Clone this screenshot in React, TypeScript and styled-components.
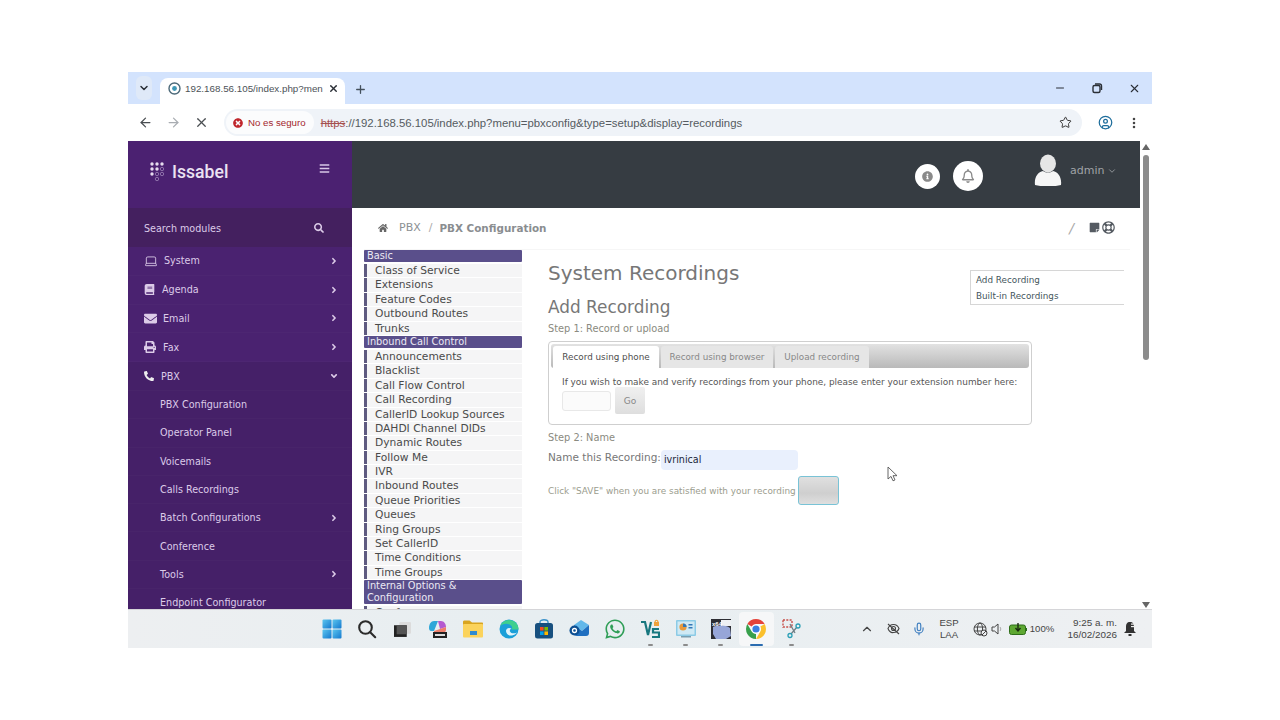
import { FunctionComponent } from "react";
import styled, { createGlobalStyle } from "styled-components";
import { ArrowLeft, ArrowRight, ChevronDown, ChevronUp, CircleUser, EllipsisVertical, Laptop, Mic, Minus, Plus, Star, X } from "lucide-react";
import { FaAngleDown, FaAngleRight, FaBars, FaBook, FaEnvelope, FaHome, FaInfoCircle, FaPhoneAlt, FaPrint, FaRegBell, FaRegLifeRing, FaSearch, FaStickyNote, FaTimesCircle, FaWhatsapp } from "react-icons/fa";

const GlobalStyle = createGlobalStyle`
  html, body {
    margin: 0;
    padding: 0;
    background: #fff;
    font-family: "DejaVu Sans", sans-serif;
  }
`;

const Frame = styled.div`
  position: relative;
  width: 1024px;
  height: 576px;
  margin: 72px auto;
  display: flex;
  flex-direction: column;
  overflow: hidden;
  background: #fff;
`;

/* browser chrome */
const TabStrip = styled.div`
  height: 32px;
  flex: none;
  display: flex;
  align-items: flex-end;
  background: #d3e3fd;
  padding-left: 8px;
  color: #2a2f36;
`;

const TabMenu = styled.div`
  width: 16px;
  height: 24px;
  margin-bottom: 4px;
  margin-right: 8px;
  border-radius: 6px;
  background: #dfe9f8;
  display: flex;
  align-items: center;
  justify-content: center;
`;

const Tab = styled.div`
  width: 185px;
  height: 26px;
  box-sizing: border-box;
  padding: 0 6px 5px 8px;
  display: flex;
  align-items: center;
  gap: 4px;
  background: #fff;
  border-radius: 8px 8px 0 0;
  font: 9.8px "Liberation Sans", sans-serif;
`;

const TabTitle = styled.span`
  flex: 1;
  padding-right: 9px;
  white-space: nowrap;
  overflow: hidden;
  color: #4c5257;
`;

const NewTab = styled.div`
  margin: 0 0 8px 9px;
  display: flex;
`;

const WindowButtons = styled.div`
  margin-left: auto;
  align-self: center;
  display: flex;
  gap: 25px;
  padding-right: 11px;
`;

const Toolbar = styled.div`
  height: 37px;
  flex: none;
  display: flex;
  align-items: center;
  padding: 0 10px;
  background: #fff;
  color: #444;
`;

const NavButton = styled.div<{ $faded?: boolean }>`
  width: 28px;
  display: flex;
  color: ${(p) => (p.$faded ? "#a9adb2" : "#4a4e52")};
`;

const AddressBar = styled.div`
  width: 858px;
  height: 27px;
  margin-right: 16px;
  margin-left: 2px;
  border-radius: 14px;
  background: #eff3f8;
  display: flex;
  align-items: center;
  flex: none;
  font: 10.7px "Liberation Sans", sans-serif;
`;

const SecurityChip = styled.div`
  height: 23px;
  margin-left: 2px;
  padding: 0 8px 0 7px;
  display: flex;
  align-items: center;
  gap: 5px;
  background: #fbfcfd;
  border-radius: 12px;
  color: #a3262d;
  font-size: 9.7px;
`;

const Url = styled.div`
  margin-left: 7px;
  color: #555b61;
  font-size: 11.37px;
  white-space: nowrap;
  s {
    color: #a5504f;
  }
`;

const StarSlot = styled.div`
  margin-left: auto;
  margin-right: 10px;
  display: flex;
`;

const ToolbarEnd = styled.div`
  display: flex;
  align-items: center;
  gap: 14px;
  color: #444;
`;

/* page */
const Page = styled.div`
  flex: 1;
  min-height: 0;
  display: flex;
`;

const Sidebar = styled.aside`
  width: 224px;
  flex: none;
  display: flex;
  flex-direction: column;
  overflow: hidden;
  background: #452068;
  color: #dccbe8;
  font-size: 9.6px;
`;

const Brand = styled.div`
  height: 67px;
  flex: none;
  box-sizing: border-box;
  padding: 20px 22px 0 22px;
  display: flex;
  align-items: flex-start;
  background: #4b2171;
`;

const LogoName = styled.span`
  margin: 1px 0 0 4px;
  font: 500 17.6px "Roboto", sans-serif;
  color: #ebe2f2;
`;

const BarsSlot = styled.div`
  margin-left: auto;
  margin-top: 2px;
  color: #d8c6e6;
  display: flex;
`;

const SearchRow = styled.div`
  height: 39px;
  flex: none;
  box-sizing: border-box;
  padding: 1px 28px 0 16px;
  display: flex;
  align-items: center;
  justify-content: space-between;
  background: #44205f;
`;

const MenuItem = styled.div<{ $top?: boolean; $dark?: boolean }>`
  height: ${(p) => (p.$top ? "28.8px" : "28.3px")};
  flex: none;
  box-sizing: border-box;
  display: flex;
  align-items: center;
  padding: 0 13px 0 ${(p) => (p.$top ? "16px" : "32px")};
  background: ${(p) => (p.$dark ? "#452068" : p.$top ? "#4a2270" : "#452068")};
  border-bottom: 1px solid rgba(255, 255, 255, 0.02);
`;

const MenuIcon = styled.span<{ $gap: number }>`
  width: 14px;
  margin-right: ${(p) => p.$gap}px;
  display: flex;
  align-items: center;
`;

const MenuArrow = styled.span`
  margin-left: auto;
  display: flex;
`;

const Main = styled.div`
  flex: 1;
  min-width: 0;
  display: flex;
  flex-direction: column;
`;

const TopBar = styled.header`
  height: 67px;
  flex: none;
  position: relative;
  background: #363c42;
`;

const RoundButton = styled.div<{ $left: number; $size: number }>`
  position: absolute;
  left: ${(p) => p.$left}px;
  top: ${(p) => 35 - p.$size / 2}px;
  width: ${(p) => p.$size}px;
  height: ${(p) => p.$size}px;
  border-radius: 50%;
  background: #fff;
  color: #8a8a8a;
  display: flex;
  align-items: center;
  justify-content: center;
`;

const UserBlock = styled.div`
  position: absolute;
  left: 682px;
  top: 13px;
  display: flex;
  align-items: center;
  gap: 8px;
  color: #a0a3a7;
  font-size: 11px;
`;

const UserName = styled.span`
  display: flex;
  align-items: center;
  gap: 3px;
  margin-top: 1px;
`;

const Crumbs = styled.div`
  height: 42px;
  flex: none;
  box-sizing: border-box;
  margin: 0 10px 0 12px;
  padding: 0 15px 2px 14px;
  display: flex;
  align-items: center;
  font-size: 11px;
  color: #8b8f93;
  border-bottom: 1px solid #f6f6f6;
`;

const CrumbLink = styled.span`
  margin-left: 11px;
`;

const CrumbSep = styled.span`
  margin: 0 7px 0 8px;
  color: #aaa;
`;

const CrumbCurrent = styled.b`
  color: #8a8d90;
  font-size: 10.4px;
`;

const CrumbTools = styled.div`
  margin-left: auto;
  display: flex;
  align-items: center;
  gap: 2px;
  color: #555b62;
`;

const CrumbSlash = styled.span`
  color: #aaa;
  font-size: 14px;
  margin-right: 13px;
  font-style: italic;
`;

const Body = styled.div`
  flex: 1;
  min-height: 0;
  display: flex;
  overflow: hidden;
`;

const ModuleNav = styled.nav`
  width: 158px;
  flex: none;
  margin-left: 12px;
  overflow: hidden;
  font-size: 10.7px;
  color: #4a4a4a;
`;

const NavSection = styled.div`
  & + & {
    margin-top: 1px;
  }
`;

const NavHead = styled.div`
  background: #5a4f8b;
  color: #eceaf4;
  border-radius: 1px;
  margin-bottom: 2px;
  padding: 0 3px;
  line-height: 12px;
  font-size: 9.8px;
`;

const NavLink = styled.div`
  height: 13.4px;
  line-height: 13.4px;
  margin-top: 1px;
  padding-left: 8px;
  border-left: 3px solid #5e5a80;
  background: #f5f5f6;
  white-space: nowrap;
`;

const Content = styled.div`
  flex: 1;
  min-width: 0;
  padding: 0 16px 0 26px;
  color: #7d7d7d;
`;

const SideBox = styled.div`
  float: right;
  width: 154px;
  height: 35px;
  box-sizing: border-box;
  margin-top: 20px;
  padding: 2px 0 0 5px;
  border: 1px solid #d6d6d6;
  border-right: none;
  font-size: 8.8px;
  line-height: 15.5px;
  color: #44565c;
`;

const Title = styled.h1`
  margin: 0;
  padding-top: 11px;
  font-size: 20px;
  line-height: 24px;
  font-weight: 400;
  color: #777;
`;

const SubTitle = styled.h2`
  margin: 13px 0 0;
  font-size: 16.9px;
  line-height: 19px;
  font-weight: 400;
  color: #777;
`;

const Step = styled.div<{ $top: number }>`
  margin-top: ${(p) => p.$top}px;
  font-size: 9.8px;
  line-height: 12px;
  color: #8a8a80;
`;

const TabsBox = styled.div`
  width: 484px;
  height: 84px;
  margin-top: 6px;
  box-sizing: border-box;
  padding: 2px;
  border: 1px solid #cfcfcf;
  border-radius: 4px;
`;

const TabsHead = styled.div`
  height: 24px;
  box-sizing: border-box;
  padding: 2px 0 0 2px;
  display: flex;
  align-items: flex-end;
  gap: 2px;
  border-radius: 3px;
  background: linear-gradient(#e2e2e2, #b9b9b9);
`;

const PanelTab = styled.div<{ $active?: boolean; $w: number }>`
  width: ${(p) => p.$w}px;
  height: 100%;
  display: flex;
  align-items: center;
  justify-content: center;
  font-size: 8.8px;
  border-radius: 3px 3px 0 0;
  background: ${(p) => (p.$active ? "#fff" : "#e6e6e6")};
  color: ${(p) => (p.$active ? "#4e4e4e" : "#888")};
`;

const PanelBody = styled.div`
  padding: 8px 0 0 11px;
  font-size: 8.92px;
  line-height: 12px;
  color: #555;
  white-space: nowrap;
`;

const ExtRow = styled.div`
  display: flex;
  align-items: center;
  gap: 4px;
  margin-top: -1px;
`;

const ExtInput = styled.div`
  width: 49px;
  height: 20px;
  box-sizing: border-box;
  border: 1px solid #e8e8e8;
  border-radius: 3px;
  background: #fbfbfb;
`;

const GoButton = styled.div`
  width: 30px;
  height: 27px;
  display: flex;
  align-items: center;
  justify-content: center;
  border-radius: 2px;
  background: linear-gradient(#f0f0f0, #dedede);
  color: #888;
  font-size: 9px;
`;

const NameRow = styled.div`
  display: flex;
  align-items: flex-start;
  height: 20px;
  margin-top: 6px;
  font-size: 10.5px;
  line-height: 14px;
  color: #777;
`;

const NameInput = styled.div`
  width: 137px;
  height: 20px;
  box-sizing: border-box;
  padding: 3px 0 0 3px;
  border-radius: 4px;
  background: #e9f0fd;
  color: #22263a;
  font-size: 9.6px;
  font-weight: 500;
`;

const SaveRow = styled.div`
  display: flex;
  align-items: center;
  margin-top: 6px;
  font-size: 8.9px;
  color: #9b9d8e;
  gap: 2px;
`;

const SaveButton = styled.div`
  width: 41px;
  height: 29px;
  box-sizing: border-box;
  border: 1px solid #79c3d6;
  border-radius: 3px;
  background: linear-gradient(#e0e0e0, #cfcfcf 60%, #dfdfdf);
`;

const Scrollbar = styled.div`
  width: 12px;
  flex: none;
  display: flex;
  flex-direction: column;
  align-items: center;
  background: #fff;
`;

const ScrollUp = styled.div`
  width: 0;
  height: 0;
  margin-top: 3px;
  border-left: 4px solid transparent;
  border-right: 4px solid transparent;
  border-bottom: 6px solid #666;
`;

const ScrollThumb = styled.div`
  width: 6px;
  height: 205px;
  margin-top: 5px;
  border-radius: 3px;
  background: #8c8c8c;
`;

const ScrollDown = styled.div`
  width: 0;
  height: 0;
  margin-top: auto;
  margin-bottom: 1px;
  border-left: 4px solid transparent;
  border-right: 4px solid transparent;
  border-top: 6px solid #666;
`;

/* windows taskbar */
const Taskbar = styled.footer`
  height: 39px;
  flex: none;
  box-sizing: border-box;
  display: flex;
  align-items: center;
  padding: 0 9px 0 186.4px;
  border-top: 1px solid #d5d5d8;
  background: linear-gradient(90deg, #edeff1, #e7eef1 40%, #eef0f2);
`;

const AppSlot = styled.div<{ $active?: boolean; $open?: boolean }>`
  position: relative;
  width: 35.35px;
  height: 34px;
  flex: none;
  display: flex;
  align-items: center;
  justify-content: center;
  border-radius: 4px;
  background: ${(p) => (p.$active ? "#f6f7f8" : "transparent")};
  &::after {
    content: "";
    display: ${(p) => (p.$open || p.$active ? "block" : "none")};
    position: absolute;
    bottom: 0;
    left: 50%;
    width: ${(p) => (p.$active ? "13px" : "5px")};
    height: 2px;
    margin-left: ${(p) => (p.$active ? "-6.5px" : "-2.5px")};
    border-radius: 1px;
    background: ${(p) => (p.$active ? "#2b6cb0" : "#8b8b8b")};
  }
`;

const Tray = styled.div`
  margin-left: auto;
  display: flex;
  align-items: center;
  color: #454545;
  font: 9.6px/12px "Liberation Sans", sans-serif;
`;

const TraySlot = styled.div<{ $w: number }>`
  width: ${(p) => p.$w}px;
  flex: none;
  display: flex;
  justify-content: center;
  text-align: center;
`;

const TrayClock = styled.div`
  width: 63px;
  flex: none;
  text-align: right;
  font-size: 9.9px;
  line-height: 12.5px;
`;

const PointerSvg = styled.svg`
  position: absolute;
  left: 759px;
  top: 394px;
`;

const sections: { head: string; links: string[] }[] = [
  { head: "Basic", links: ["Class of Service", "Extensions", "Feature Codes", "Outbound Routes", "Trunks"] },
  {
    head: "Inbound Call Control",
    links: [
      "Announcements", "Blacklist", "Call Flow Control", "Call Recording", "CallerID Lookup Sources",
      "DAHDI Channel DIDs", "Dynamic Routes", "Follow Me", "IVR", "Inbound Routes", "Queue Priorities",
      "Queues", "Ring Groups", "Set CallerID", "Time Conditions", "Time Groups",
    ],
  },
  { head: "Internal Options & Configuration", links: ["Conferences"] },
];

const Logo = () => (
  <svg width="18" height="24" viewBox="0 0 18 24">
    {[
      [2, 3, 1], [7, 3, 1], [12, 3, 1],
      [2, 8, 1], [7, 8, 1], [12, 8, 0],
      [2, 13, 1], [7, 13, 0], [12, 13, 0],
      [7, 18, 0],
    ].map(([x, y, full], i) =>
      full ? (
        <circle key={i} cx={x} cy={y} r="1.7" fill="#e6dcef" />
      ) : (
        <circle key={i} cx={x} cy={y} r="1.7" fill="none" stroke="#a78fc0" strokeWidth="0.7" />
      )
    )}
  </svg>
);

const Avatar = () => (
  <svg width="28" height="32" viewBox="0 0 28 32">
    <ellipse cx="14" cy="9.5" rx="8" ry="9" fill="#e6e6e6" />
    <path d="M1 31c-1-8 3-13 8-14 3 2 7 2 10 0 5 1 9 6 8 14-8 2-18 2-26 0z" fill="#f6f6f6" />
  </svg>
);

const Favicon = () => (
  <svg width="13" height="13" viewBox="0 0 13 13" fill="none">
    <circle cx="6.5" cy="6.5" r="5.5" stroke="#4d6a7a" strokeWidth="1.4" />
    <circle cx="6.5" cy="6.5" r="2.4" fill="#3f97b5" />
  </svg>
);

const CursorArrow = () => (
  <PointerSvg width="12" height="16" viewBox="0 0 12 16">
    <path d="M1 1v12l3-2.6 2 4.4 2-.9-2-4.2h4z" fill="#fff" stroke="#555" strokeWidth="0.9" />
  </PointerSvg>
);

const WinLogo = () => (
  <svg width="20" height="20" viewBox="0 0 20 20">
    <defs>
      <linearGradient id="win" x1="0" y1="0" x2="1" y2="1">
        <stop offset="0" stopColor="#5cc6ef" />
        <stop offset="1" stopColor="#1479cf" />
      </linearGradient>
    </defs>
    <rect x="0.5" y="0.5" width="9" height="9" rx="1" fill="url(#win)" />
    <rect x="10.5" y="0.5" width="9" height="9" rx="1" fill="url(#win)" />
    <rect x="0.5" y="10.5" width="9" height="9" rx="1" fill="url(#win)" />
    <rect x="10.5" y="10.5" width="9" height="9" rx="1" fill="url(#win)" />
  </svg>
);

const SearchGlyph = () => (
  <svg width="20" height="20" viewBox="0 0 20 20" fill="none" stroke="#2b2b2b" strokeWidth="2.1" strokeLinecap="round">
    <circle cx="8.5" cy="8.5" r="6.3" />
    <path d="M13.2 13.2l5 5" />
  </svg>
);

const TaskView = () => (
  <svg width="17" height="17" viewBox="0 0 16 16">
    <rect x="5" y="1" width="11" height="11" rx="1" fill="#dcdcdc" />
    <rect x="0" y="4" width="12" height="11" fill="#222" />
    <rect x="2.5" y="4" width="9.5" height="8.5" fill="#555" />
  </svg>
);

const CopilotApp = () => (
  <svg width="20" height="20" viewBox="0 0 20 20">
    <path d="M1 9c0-4 2-7 5-7h4L6 12H3c-1 0-2-1-2-3z" fill="#2fa7d8" />
    <path d="M10 2h3c3 0 5 3 5 6l-6 2z" fill="#b55bd0" />
    <path d="M6 12l6-2 6-2v3c0 2-2 3-4 3H6z" fill="#ef7f6a" />
    <rect x="5" y="13" width="14" height="6" fill="#222" />
    <rect x="7" y="15" width="10" height="2" fill="#ddd" />
  </svg>
);

const Folder = () => (
  <svg width="20" height="18" viewBox="0 0 20 18">
    <path d="M0 2c0-1 .6-1.5 1.5-1.5h5L9 2.5h10c.6 0 1 .4 1 1V5H0z" fill="#d9a520" />
    <rect y="4" width="20" height="13.5" rx="1" fill="#fbd35c" />
    <rect x="7" y="11" width="7" height="4" fill="#2f8bd0" />
  </svg>
);

const Edge = () => (
  <svg width="20" height="20" viewBox="0 0 20 20">
    <circle cx="10" cy="10" r="9.5" fill="#1b9fd8" />
    <path d="M19.5 10c0-5-4-9-9.5-9C5.5 1 2 4 1.5 7 4 4.5 9 4 12 6.5c1.5 1.2 1.5 3 .5 4h7z" fill="#3ecf8e" />
    <path d="M7 12c0 3 3 5 6 4.5 2-.3 4-1.5 5-3-3 1.5-6 1-7-1-.5-1 0-2.5 1.5-3C9 8 7 10 7 12z" fill="#dff3fb" />
  </svg>
);

const Store = () => (
  <svg width="18" height="20" viewBox="0 0 18 20">
    <path d="M5 5V3c0-3 8-3 8 0v2" fill="none" stroke="#3d93c9" strokeWidth="1.4" />
    <rect y="4" width="18" height="15.5" rx="2.5" fill="#17507f" />
    <rect x="5" y="8" width="3.6" height="3.6" fill="#f25022" />
    <rect x="9.4" y="8" width="3.6" height="3.6" fill="#7fba00" />
    <rect x="5" y="12.4" width="3.6" height="3.6" fill="#00a4ef" />
    <rect x="9.4" y="12.4" width="3.6" height="3.6" fill="#ffb900" />
  </svg>
);

const OutlookApp = () => (
  <svg width="20" height="18" viewBox="0 0 20 18">
    <path d="M5 5l7-5 8 5-7 6z" fill="#62b8ea" />
    <path d="M5 5l8 6 7-6v8c0 2-1 3-3 3H8c-2 0-3-1-3-3z" fill="#1f6fc0" />
    <circle cx="5.5" cy="10.5" r="5" fill="#0d4f92" />
    <circle cx="5.5" cy="10.5" r="2" fill="none" stroke="#fff" strokeWidth="1.3" />
  </svg>
);

const VsCodeLike = () => (
  <svg width="20" height="20" viewBox="0 0 20 20" fill="none" stroke="#17777f" strokeWidth="2.2">
    <path d="M1 3h4l3 13 3-13" />
    <path d="M19 10h-6v3.5h6V18h-7" />
    <rect x="14" y="3" width="5" height="4" fill="#f0a13a" stroke="none" />
    <path d="M15 3.5c0-3 3-3 3 0" stroke="#f0a13a" strokeWidth="1.2" />
  </svg>
);

const ControlPanel = () => (
  <svg width="20" height="18" viewBox="0 0 20 18">
    <rect width="20" height="16" rx="1" fill="#8ccbe6" />
    <rect x="1.5" y="1.5" width="17" height="13" fill="#cfe9f4" />
    <circle cx="7" cy="7" r="3.6" fill="#e89a3c" />
    <path d="M7 7V3.4A3.6 3.6 0 0 1 10.6 7z" fill="#3278b8" />
    <rect x="12.5" y="4" width="4" height="1.5" fill="#3278b8" />
    <rect x="12.5" y="7" width="4" height="1.5" fill="#3278b8" />
    <rect x="5" y="16" width="10" height="1.5" fill="#7a9eb0" />
  </svg>
);

const X64App = () => (
  <svg width="20" height="20" viewBox="0 0 20 20">
    <rect width="20" height="20" fill="#2d2d33" />
    <rect x="10" y="1" width="10" height="6" fill="#eef0f4" />
    <path d="M2 8c5-2 13-2 17 1l1 8-5 3H5L2 15z" fill="#97a6d8" />
    <text x="1" y="6.5" fontSize="6" fontWeight="700" fill="#fff" fontFamily="Liberation Sans, sans-serif">x64</text>
  </svg>
);

const Chrome = () => (
  <svg width="20" height="20" viewBox="0 0 20 20">
    <path d="M10 0a10 10 0 0 1 8.66 5H10a5 5 0 0 0-4.33 2.5L1.34 5A10 10 0 0 1 10 0z" fill="#e5433a" />
    <path d="M18.66 5A10 10 0 0 1 10 20l4.33-7.5a5 5 0 0 0 0-5z" fill="#fbc02d" />
    <path d="M10 20A10 10 0 0 1 1.34 5l4.33 7.5A5 5 0 0 0 10 15z" fill="#38a04c" />
    <circle cx="10" cy="10" r="4.6" fill="#fff" />
    <circle cx="10" cy="10" r="3.6" fill="#3b7fe0" />
  </svg>
);

const Snip = () => (
  <svg width="20" height="20" viewBox="0 0 20 20" fill="none">
    <rect x="1" y="1" width="9" height="7" stroke="#c8504a" strokeWidth="1.4" strokeDasharray="2 1.3" />
    <path d="M8 5l5 9M15 8l-6 7" stroke="#6f7f86" strokeWidth="1.3" />
    <circle cx="16" cy="7" r="2" stroke="#2b9fb5" strokeWidth="1.3" />
    <circle cx="8" cy="16.5" r="2" stroke="#2b9fb5" strokeWidth="1.3" />
  </svg>
);

const CloudOff = () => (
  <svg width="15" height="15" viewBox="0 0 15 15" fill="none" stroke="#444" strokeWidth="1.1">
    <path d="M2 6.5c1-2.5 3-4 5.5-4s4.5 1.500 5.5 4c-1 2.5-3 4-5.5 4-2.5.5-4.5-1.500-5.5-4z" />
    <path d="M2 2l11 10" />
    <circle cx="7.5" cy="6.5" r="2" />
  </svg>
);

const GlobeOff = () => (
  <svg width="15" height="15" viewBox="0 0 15 15" fill="none" stroke="#444" strokeWidth="1">
    <circle cx="7" cy="7" r="6" />
    <ellipse cx="7" cy="7" rx="2.6" ry="6" />
    <path d="M1 5h12M1 9h12" />
    <circle cx="11" cy="11" r="3" fill="#eef0f2" />
    <path d="M9 13l4-4" />
  </svg>
);

const Speaker = () => (
  <svg width="14" height="14" viewBox="0 0 14 14" fill="none" stroke="#444" strokeWidth="1">
    <path d="M1 5v4h2.5L7 12V2L3.5 5z" />
    <path d="M9 5c1 1 1 3 0 4" stroke="#aaa" />
  </svg>
);

const Battery = () => (
  <svg width="18" height="12" viewBox="0 0 18 12">
    <rect x="0.5" y="2" width="16" height="9.5" rx="2" fill="#5ea832" stroke="#2f6e1a" />
    <rect x="16.5" y="5" width="1.5" height="3" fill="#2f6e1a" />
    <path d="M9 0v7M6.5 5L9 8l2.5-3" stroke="#1a2a10" strokeWidth="1.4" fill="none" />
  </svg>
);

const NotifyBell = () => (
  <svg width="14" height="16" viewBox="0 0 14 16">
    <path d="M7 1c-3 0-4 2-4 5v4l-2 2h12l-2-2V6c0-3-1-5-4-5z" fill="#333" />
    <rect x="5.5" y="13" width="3" height="2" fill="#333" />
    <rect x="8" y="2.5" width="5" height="1.2" fill="#eee" />
    <rect x="8" y="5" width="5" height="1.2" fill="#eee" />
  </svg>
);

const apps = [
  { key: "win", el: <WinLogo /> },
  { key: "search", el: <SearchGlyph /> },
  { key: "view", el: <TaskView /> },
  { key: "copilot", el: <CopilotApp /> },
  { key: "folder", el: <Folder /> },
  { key: "edge", el: <Edge /> },
  { key: "store", el: <Store /> },
  { key: "outlook", el: <OutlookApp /> },
  { key: "whatsapp", el: <FaWhatsapp size={22} color="#2f9e57" /> },
  { key: "vs", el: <VsCodeLike />, open: true },
  { key: "panel", el: <ControlPanel />, open: true },
  { key: "x64", el: <X64App />, open: true },
  { key: "chrome", el: <Chrome />, active: true },
  { key: "snip", el: <Snip />, open: true },
];

const App: FunctionComponent = () => {
  return (
    <>
      <GlobalStyle />
      <Frame>
        <TabStrip>
          <TabMenu>
            <ChevronDown size={12} strokeWidth={3} />
          </TabMenu>
          <Tab>
            <Favicon />
            <TabTitle>192.168.56.105/index.php?men</TabTitle>
            <X size={11} strokeWidth={3} />
          </Tab>
          <NewTab>
            <Plus size={13} strokeWidth={2.4} color="#44505c" />
          </NewTab>
          <WindowButtons>
            <Minus size={12} strokeWidth={2} />
            <svg width="12" height="12" viewBox="0 0 12 12" fill="none" stroke="#2a2f36" strokeWidth="1.4">
              <rect x="2" y="3.5" width="7" height="7" rx="1.5" />
              <path d="M4 2h4.5A2 2 0 0 1 10.5 4v4" />
            </svg>
            <X size={13} strokeWidth={2} />
          </WindowButtons>
        </TabStrip>

        <Toolbar>
          <NavButton>
            <ArrowLeft size={15} />
          </NavButton>
          <NavButton $faded>
            <ArrowRight size={15} />
          </NavButton>
          <NavButton>
            <X size={15} />
          </NavButton>
          <AddressBar>
            <SecurityChip>
              <FaTimesCircle size={10} color="#c0272d" />
              No es seguro
            </SecurityChip>
            <Url>
              <s>https</s>://192.168.56.105/index.php?menu=pbxconfig&amp;type=setup&amp;display=recordings
            </Url>
            <StarSlot>
              <Star size={13} strokeWidth={1.8} color="#333" />
            </StarSlot>
          </AddressBar>
          <ToolbarEnd>
            <CircleUser size={15} color="#1f6e9c" strokeWidth={2} />
            <EllipsisVertical size={14} strokeWidth={2.4} />
          </ToolbarEnd>
        </Toolbar>

        <Page>
          <Sidebar>
            <Brand>
              <Logo />
              <LogoName>Issabel</LogoName>
              <BarsSlot>
                <FaBars size={11} />
              </BarsSlot>
            </Brand>
            <SearchRow>
              Search modules
              <FaSearch size={10} />
            </SearchRow>
            <MenuItem $top>
              <MenuIcon $gap={6}><Laptop size={14} strokeWidth={1.5} /></MenuIcon>
              System
              <MenuArrow><FaAngleRight size={10} /></MenuArrow>
            </MenuItem>
            <MenuItem $top>
              <MenuIcon $gap={4}><FaBook size={11} /></MenuIcon>
              Agenda
              <MenuArrow><FaAngleRight size={10} /></MenuArrow>
            </MenuItem>
            <MenuItem $top>
              <MenuIcon $gap={5}><FaEnvelope size={13} /></MenuIcon>
              Email
              <MenuArrow><FaAngleRight size={10} /></MenuArrow>
            </MenuItem>
            <MenuItem $top>
              <MenuIcon $gap={5}><FaPrint size={12} /></MenuIcon>
              Fax
              <MenuArrow><FaAngleRight size={10} /></MenuArrow>
            </MenuItem>
            <MenuItem $top $dark>
              <MenuIcon $gap={3}><FaPhoneAlt size={10} color="#eee" /></MenuIcon>
              PBX
              <MenuArrow><FaAngleDown size={10} /></MenuArrow>
            </MenuItem>
            <MenuItem>PBX Configuration</MenuItem>
            <MenuItem>Operator Panel</MenuItem>
            <MenuItem>Voicemails</MenuItem>
            <MenuItem>Calls Recordings</MenuItem>
            <MenuItem>
              Batch Configurations
              <MenuArrow><FaAngleRight size={10} /></MenuArrow>
            </MenuItem>
            <MenuItem>Conference</MenuItem>
            <MenuItem>
              Tools
              <MenuArrow><FaAngleRight size={10} /></MenuArrow>
            </MenuItem>
            <MenuItem>Endpoint Configurator</MenuItem>
          </Sidebar>

          <Main>
            <TopBar>
              <RoundButton $left={563} $size={25}>
                <FaInfoCircle size={11} />
              </RoundButton>
              <RoundButton $left={601} $size={30}>
                <FaRegBell size={14} />
              </RoundButton>
              <UserBlock>
                <Avatar />
                <UserName>
                  admin <ChevronDown size={10} />
                </UserName>
              </UserBlock>
            </TopBar>
            <Crumbs>
              <FaHome size={10} color="#666" />
              <CrumbLink>PBX</CrumbLink>
              <CrumbSep>/</CrumbSep>
              <CrumbCurrent>PBX Configuration</CrumbCurrent>
              <CrumbTools>
                <CrumbSlash>/</CrumbSlash>
                <FaStickyNote size={11} />
                <FaRegLifeRing size={13} />
              </CrumbTools>
            </Crumbs>
            <Body>
              <ModuleNav>
                {sections.map((section) => (
                  <NavSection key={section.head}>
                    <NavHead>{section.head}</NavHead>
                    {section.links.map((link) => (
                      <NavLink key={link}>{link}</NavLink>
                    ))}
                  </NavSection>
                ))}
              </ModuleNav>
              <Content>
                <SideBox>
                  Add Recording
                  <br />
                  Built-in Recordings
                </SideBox>
                <Title>System Recordings</Title>
                <SubTitle>Add Recording</SubTitle>
                <Step $top={6}>Step 1: Record or upload</Step>
                <TabsBox>
                  <TabsHead>
                    <PanelTab $active $w={106}>Record using phone</PanelTab>
                    <PanelTab $w={112}>Record using browser</PanelTab>
                    <PanelTab $w={94}>Upload recording</PanelTab>
                  </TabsHead>
                  <PanelBody>
                    If you wish to make and verify recordings from your phone, please enter your extension number here:
                    <ExtRow>
                      <ExtInput />
                      <GoButton>Go</GoButton>
                    </ExtRow>
                  </PanelBody>
                </TabsBox>
                <Step $top={7}>Step 2: Name</Step>
                <NameRow>
                  Name this Recording:
                  <NameInput>ivrinical</NameInput>
                </NameRow>
                <SaveRow>
                  Click "SAVE" when you are satisfied with your recording
                  <SaveButton />
                </SaveRow>
              </Content>
            </Body>
          </Main>
          <Scrollbar>
            <ScrollUp />
            <ScrollThumb />
            <ScrollDown />
          </Scrollbar>
        </Page>

        <Taskbar>
          {apps.map((app) => (
            <AppSlot key={app.key} $active={app.active} $open={app.open}>
              {app.el}
            </AppSlot>
          ))}
          <Tray>
            <TraySlot $w={18}><ChevronUp size={14} /></TraySlot>
            <TraySlot $w={34}><CloudOff /></TraySlot>
            <TraySlot $w={18}><Mic size={14} color="#3f7fc0" /></TraySlot>
            <TraySlot $w={42}>ESP<br />LAA</TraySlot>
            <TraySlot $w={20}><GlobeOff /></TraySlot>
            <TraySlot $w={16}><Speaker /></TraySlot>
            <TraySlot $w={24}><Battery /></TraySlot>
            <TraySlot $w={24}>100%</TraySlot>
            <TrayClock>9:25 a. m.<br />16/02/2026</TrayClock>
            <TraySlot $w={26}><NotifyBell /></TraySlot>
          </Tray>
        </Taskbar>
        <CursorArrow />
      </Frame>
    </>
  );
};

export default App;
